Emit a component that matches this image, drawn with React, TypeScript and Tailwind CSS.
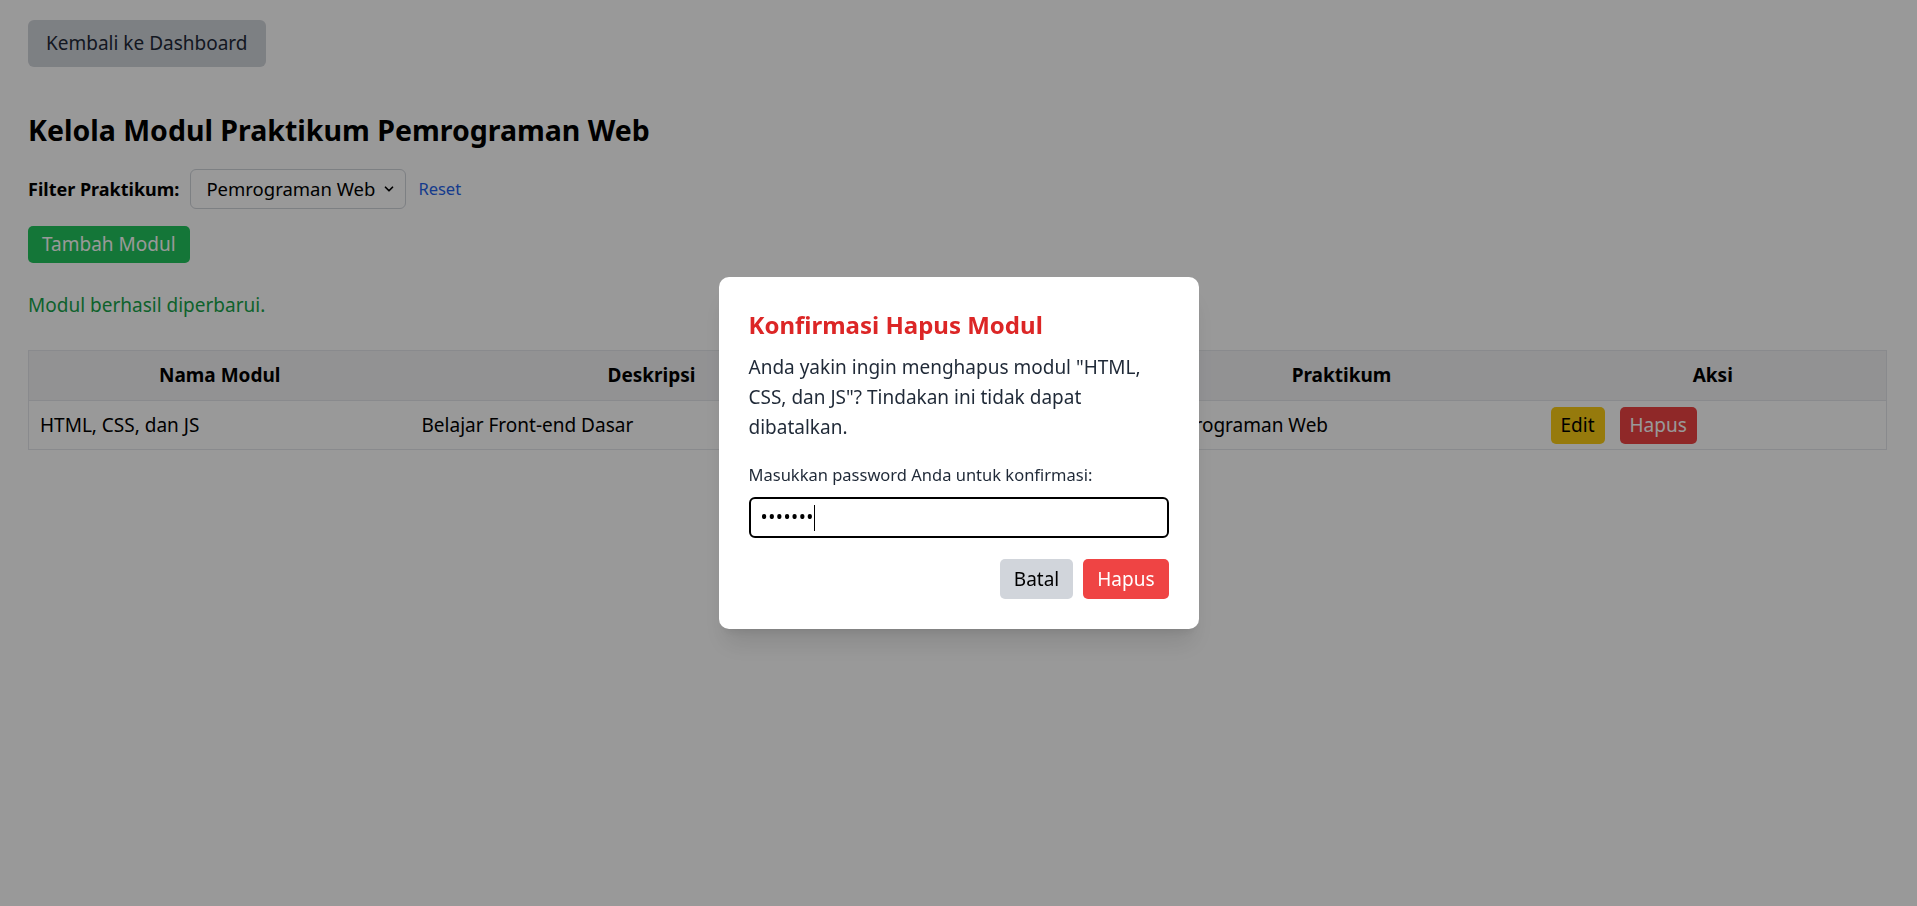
import { ChevronDown } from "lucide-react";

const rows = [
  {
    nama: "HTML, CSS, dan JS",
    deskripsi: "Belajar Front-end Dasar",
    file: "materi-1.pdf",
    praktikum: "Pemrograman Web",
  },
];

export default function App() {
  return (
    <div className="relative min-h-screen bg-white text-[19px] text-black font-['Noto_Sans',sans-serif]">
      <div className="pt-[20px] pl-[28px] pr-[30px]">
        <button className="h-[47px] px-[18px] rounded-[6px] bg-[#d1d5db] text-[#1f2937]">
          Kembali ke Dashboard
        </button>

        <h1 className="mt-[43px] text-[28.5px] leading-[40px] font-bold">
          Kelola Modul Praktikum Pemrograman Web
        </h1>

        <div className="mt-[19px] flex items-center">
          <label className="text-[18px] font-bold mr-[11px]">Filter Praktikum:</label>
          <div className="flex items-center justify-between w-[216px] h-[40px] pl-[15px] pr-[9px] border border-[#d1d5db] rounded-[6px] whitespace-nowrap">
            <span className="text-[18.5px]">Pemrograman Web</span>
            <ChevronDown size={14} strokeWidth={3} />
          </div>
          <a className="ml-[12px] text-[16.5px] text-[#2563eb]">Reset</a>
        </div>

        <button className="mt-[17px] h-[37px] px-[14px] rounded-[5px] bg-[#22c55e] text-white">
          Tambah Modul
        </button>

        <p className="mt-[27px] leading-[30px] text-[#16a34a]">Modul berhasil diperbarui.</p>

        <table className="mt-[30px] w-full border-collapse border border-[#e5e7eb]">
          <thead>
            <tr className="bg-[#f3f4f6]">
              <th className="w-[382px] h-[50px] px-[10px] font-bold">Nama Modul</th>
              <th className="w-[482px] px-[10px] font-bold">Deskripsi</th>
              <th className="w-[251px] px-[10px] font-bold">File Materi</th>
              <th className="w-[396px] px-[10px] font-bold">Praktikum</th>
              <th className="px-[10px] font-bold">Aksi</th>
            </tr>
          </thead>
          <tbody>
            {rows.map((r) => (
              <tr key={r.nama} className="border-t border-[#e5e7eb]">
                <td className="h-[49px] px-[11px]">{r.nama}</td>
                <td className="px-[11px]">{r.deskripsi}</td>
                <td className="px-[11px]">{r.file}</td>
                <td className="px-[11px]">{r.praktikum}</td>
                <td className="px-[11px]">
                  <button className="h-[37px] px-[10px] mr-[15px] rounded-[5px] bg-[#facc15] text-black">
                    Edit
                  </button>
                  <button className="h-[37px] px-[10px] rounded-[5px] bg-[#ef4444] text-white">
                    Hapus
                  </button>
                </td>
              </tr>
            ))}
          </tbody>
        </table>
      </div>

      {/* modal konfirmasi */}
      <div className="fixed inset-0 bg-black/40 flex items-center justify-center">
        <div className="w-[480px] p-[30px] rounded-[10px] bg-white shadow-xl">
          <h2 className="text-[24px] leading-[35px] font-bold text-[#dc2626] mb-[10px]">
            Konfirmasi Hapus Modul
          </h2>
          <p className="leading-[30px] text-[#1f2937] mb-[20px]">
            Anda yakin ingin menghapus modul "HTML, CSS, dan JS"? Tindakan ini tidak dapat dibatalkan.
          </p>
          <label className="block text-[16.5px] leading-[25px] text-[#1f2937] mb-[10px]">
            Masukkan password Anda untuk konfirmasi:
          </label>
          <div className="h-[41px] flex items-center px-[10px] border-2 border-black rounded-[6px]">
            <span className="tracking-[0.5px]">•••••••</span>
            <span className="w-px h-[26px] bg-black" />
          </div>
          <div className="mt-[21px] flex justify-end gap-[10px]">
            <button className="h-[40px] px-[14px] rounded-[5px] bg-[#d1d5db] text-black">Batal</button>
            <button className="h-[40px] px-[14px] rounded-[5px] bg-[#ef4444] text-white">Hapus</button>
          </div>
        </div>
      </div>
    </div>
  );
}
